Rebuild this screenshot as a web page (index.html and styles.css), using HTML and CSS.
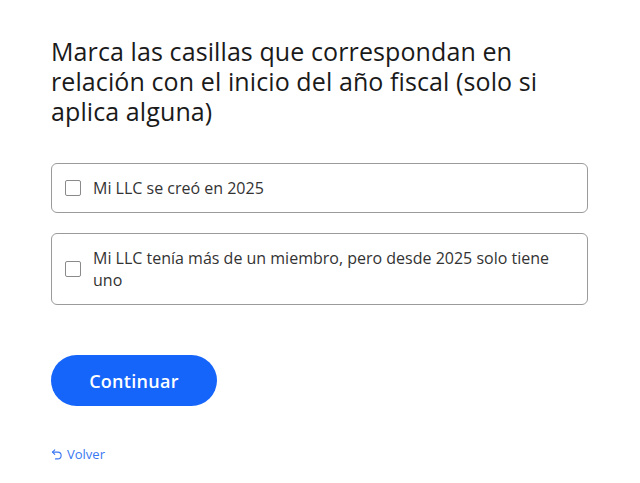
FILE: index.html
```html
<!DOCTYPE html>
<html lang="es">
<head>
<meta charset="utf-8">
<link rel="stylesheet" href="styles.css">
</head>
<body>
<main class="page">
  <h1 class="title">Marca las casillas que correspondan en relación con el inicio del año fiscal (solo si aplica alguna)</h1>
  <div class="options">
    <label class="option"><span class="box"></span><span class="label">Mi LLC se creó en 2025</span></label>
    <label class="option"><span class="box"></span><span class="label">Mi LLC tenía más de un miembro, pero desde 2025 solo tiene uno</span></label>
  </div>
  <button class="primary">Continuar</button>
  <a class="back" href="#"><svg class="back-icon" viewBox="0 0 16 16" width="12" height="12" fill="none" stroke="currentColor" stroke-width="1.5" stroke-linecap="round" stroke-linejoin="round"><path d="M5 2.5 2 5.5l3 3"/><path d="M2 5.5h7a4.5 4.5 0 0 1 0 9H6"/></svg>Volver</a>
</main>
</body>
</html>
```
FILE: styles.css
```css
html, body { margin: 0; padding: 0; background: #fff; }
body { font-family: "Open Sans", "Lato", sans-serif; color: #1a1a1a; }
.page { padding: 36px 52px 0 51px; width: 537px; display: flex; flex-direction: column; align-items: flex-start; }
.title { font-size: 25px; line-height: 30px; font-weight: 500; margin: 0 0 37px; letter-spacing: 0.1px; }
.options { display: flex; flex-direction: column; gap: 20px; width: 100%; }
.option { display: flex; align-items: center; gap: 12px; border: 1px solid #9b9b9b; border-radius: 6px; padding: 13px 13px; font-size: 16px; line-height: 22px; color: #333; }
.box { flex: none; width: 14px; height: 14px; border: 1px solid #8a8a8a; border-radius: 2px; background: #fff; }
.label { flex: 1; }
.primary { margin-top: 50px; width: 166px; height: 51px; border: none; border-radius: 26px; background: #1565fb; color: #fff; font-family: inherit; font-size: 18px; font-weight: 600; letter-spacing: 0.3px; cursor: pointer; }
.back { margin-top: 40px; display: flex; align-items: center; gap: 4px; color: #3a78f2; text-decoration: none; font-size: 13px; line-height: 16px; }
.back-icon { flex: none; }
```
